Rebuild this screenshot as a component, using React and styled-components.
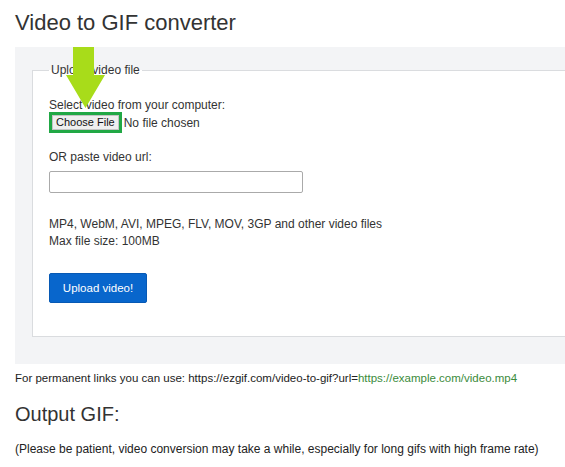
import styled, { createGlobalStyle } from 'styled-components'

const GlobalStyle = createGlobalStyle`
  html, body {
    margin: 0;
    padding: 0;
    background: #fff;
    overflow: hidden;
  }
  body {
    font-family: "Liberation Sans", Arial, sans-serif;
    color: #333;
  }
`

const Page = styled.div`
  padding: 9px 15px 0 15px;
`

const Title = styled.h1`
  margin: 0 0 10px 0;
  font-size: 22px;
  font-weight: normal;
  line-height: 28px;
  color: #333;
`

const Panel = styled.div`
  position: relative;
  width: 700px;
  background: #f3f4f6;
  padding: 16px 0 27px 17px;
`

const Fieldset = styled.fieldset`
  margin: 0;
  background: #fff;
  border: 1px solid #dadcdf;
  padding: 21px 16px 33px 16px;
  font-size: 12px;
  line-height: 14px;
`

const Legend = styled.legend`
  padding: 0 2px;
  font-size: 12px;
  line-height: 14px;
`

const Label = styled.div`
  margin-top: ${p => p.$top || 0}px;
`

const FileRow = styled.div`
  display: flex;
  align-items: center;
  gap: 2px;
`

const Highlight = styled.span`
  display: inline-flex;
  border: 3px solid #21a845;
`

const FileButton = styled.span`
  display: inline-block;
  padding: 0 3px;
  background: #efefef;
  border: 1px solid #c4c4c4;
  font-size: 11px;
  line-height: 13px;
  color: #111;
`

const UrlInput = styled.input`
  display: block;
  box-sizing: border-box;
  margin-top: 7px;
  width: 254px;
  height: 22px;
  border: 1px solid #aaa;
  border-radius: 2px;
  padding: 0 4px;
`

const Info = styled.div`
  margin-top: 23px;
  line-height: 17px;
`

const UploadButton = styled.button`
  display: block;
  margin-top: 23px;
  width: 98px;
  height: 30px;
  background: #0866cc;
  border: 1px solid #0759b4;
  border-radius: 2px;
  color: #fff;
  font-family: "Liberation Sans", Arial, sans-serif;
  font-size: 11.5px;
  padding: 0;
`

const Arrow = styled.svg`
  position: absolute;
  left: 51px;
  top: 0;
`

const Note = styled.div`
  margin-top: 7px;
  font-size: 11.5px;
  line-height: 14px;
  color: #222;
`

const Link = styled.span`
  color: #3b8b3b;
`

const Subtitle = styled.h2`
  margin: 18px 0 0 0;
  font-size: 20px;
  font-weight: normal;
  line-height: 23px;
  color: #333;
`

const Para = styled.p`
  margin: 16px 0 0 0;
  font-size: 12px;
  line-height: 14px;
  color: #222;
`

export default function App() {
  return (
    <>
      <GlobalStyle />
      <Page>
        <Title>Video to GIF converter</Title>
        <Panel>
          <Fieldset>
            <Legend>Upload video file</Legend>
            <Label>Select video from your computer:</Label>
            <FileRow>
              <Highlight><FileButton>Choose File</FileButton></Highlight>
              <span>No file chosen</span>
            </FileRow>
            <Label $top={17}>OR paste video url:</Label>
            <UrlInput type="text" />
            <Info>
              MP4, WebM, AVI, MPEG, FLV, MOV, 3GP and other video files<br />
              Max file size: 100MB
            </Info>
            <UploadButton>Upload video!</UploadButton>
          </Fieldset>
          <Arrow width="39" height="61" viewBox="0 0 39 61">
            <path d="M7 0 H28 V28 H39 L19.5 61 L0 28 H7 Z" fill="#a8dc1a" />
          </Arrow>
        </Panel>
        <Note>
          For permanent links you can use: https://ezgif.com/video-to-gif?url=<Link>https://example.com/video.mp4</Link>
        </Note>
        <Subtitle>Output GIF:</Subtitle>
        <Para>(Please be patient, video conversion may take a while, especially for long gifs with high frame rate)</Para>
      </Page>
    </>
  )
}
